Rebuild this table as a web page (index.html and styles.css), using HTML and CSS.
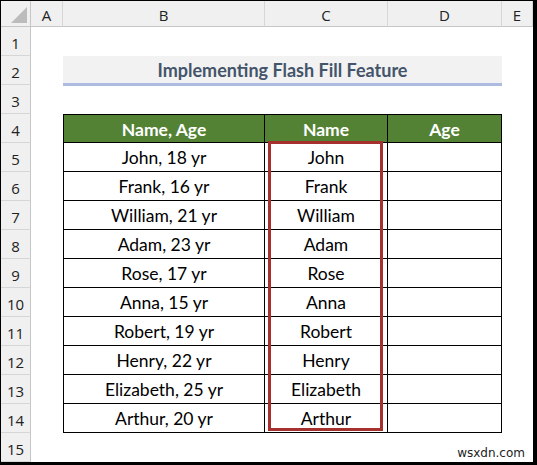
FILE: index.html
```html
<!DOCTYPE html>
<html>
<head>
<meta charset="utf-8">
<link rel="stylesheet" href="styles.css">
</head>
<body>
<div class="sheet">
  <div class="corner"><span class="tri"></span></div>
  <div class="colh">A</div>
  <div class="colh">B</div>
  <div class="colh">C</div>
  <div class="colh">D</div>
  <div class="colh">E</div>

  <div class="rowh">1</div><div class="blank full"></div>
  <div class="rowh">2</div><div class="blank"></div><div class="title">Implementing Flash Fill Feature</div><div class="blank"></div>
  <div class="rowh">3</div><div class="blank full"></div>

  <div class="rowh">4</div><div class="blank"></div>
  <div class="cell head first top">Name, Age</div><div class="cell head top">Name</div><div class="cell head top">Age</div><div class="blank"></div>

  <div class="rowh">5</div><div class="blank"></div><div class="cell first">John, 18 yr</div><div class="cell">John</div><div class="cell"></div><div class="blank"></div>
  <div class="rowh">6</div><div class="blank"></div><div class="cell first">Frank, 16 yr</div><div class="cell">Frank</div><div class="cell"></div><div class="blank"></div>
  <div class="rowh">7</div><div class="blank"></div><div class="cell first">William, 21 yr</div><div class="cell">William</div><div class="cell"></div><div class="blank"></div>
  <div class="rowh">8</div><div class="blank"></div><div class="cell first">Adam, 23 yr</div><div class="cell">Adam</div><div class="cell"></div><div class="blank"></div>
  <div class="rowh">9</div><div class="blank"></div><div class="cell first">Rose, 17 yr</div><div class="cell">Rose</div><div class="cell"></div><div class="blank"></div>
  <div class="rowh">10</div><div class="blank"></div><div class="cell first">Anna, 15 yr</div><div class="cell">Anna</div><div class="cell"></div><div class="blank"></div>
  <div class="rowh">11</div><div class="blank"></div><div class="cell first">Robert, 19 yr</div><div class="cell">Robert</div><div class="cell"></div><div class="blank"></div>
  <div class="rowh">12</div><div class="blank"></div><div class="cell first">Henry, 22 yr</div><div class="cell">Henry</div><div class="cell"></div><div class="blank"></div>
  <div class="rowh">13</div><div class="blank"></div><div class="cell first">Elizabeth, 25 yr</div><div class="cell">Elizabeth</div><div class="cell"></div><div class="blank"></div>
  <div class="rowh">14</div><div class="blank"></div><div class="cell first">Arthur, 20 yr</div><div class="cell">Arthur</div><div class="cell"></div><div class="blank"></div>
  <div class="rowh">15</div><div class="blank full"></div>

  <div class="highlight"></div>
  <div class="watermark">wsxdn.com</div>
</div>
</body>
</html>
```

FILE: styles.css
```css
html, body {
  margin: 0;
  padding: 0;
  background: #000;
}
.sheet {
  position: relative;
  margin: 1px 0 0 1px;
  width: 532px;
  height: 461px;
  background: #fff;
  display: grid;
  grid-template-columns: 30px 32px 202px 123px 114px 31px;
  grid-template-rows: 26px repeat(15, 29px);
  font-family: "Lato", "Liberation Sans", sans-serif;
  overflow: hidden;
}
.corner {
  background: #f0f0f0;
  border-right: 1px solid #c6c6c6;
  border-bottom: 1px solid #c6c6c6;
  position: relative;
}
.tri {
  position: absolute;
  right: 3px;
  bottom: 3px;
  width: 0;
  height: 0;
  border-left: 16px solid transparent;
  border-bottom: 16px solid #bcbcbc;
}
.colh {
  background: #f0f0f0;
  border-right: 1px solid #d6d6d6;
  border-bottom: 1px solid #c6c6c6;
  display: flex;
  align-items: center;
  justify-content: center;
  font-family: "Open Sans", "Noto Sans", sans-serif;
  font-size: 15px;
  color: #222;
  padding-top: 2px;
  box-sizing: border-box;
}
.rowh {
  background: #f0f0f0;
  border-right: 1px solid #c6c6c6;
  border-bottom: 1px solid #d6d6d6;
  display: flex;
  align-items: center;
  justify-content: center;
  font-family: "Open Sans", "Noto Sans", sans-serif;
  font-size: 15px;
  color: #222;
  padding-top: 3px;
  box-sizing: border-box;
}
.blank.full {
  grid-column: 2 / 7;
}
.title {
  grid-column: 3 / 6;
  margin-bottom: -1px;
  background: #f2f2f2;
  border-bottom: 3px solid #adbbe0;
  color: #44546a;
  font-weight: 700;
  font-size: 18px;
  display: flex;
  align-items: center;
  justify-content: center;
  box-sizing: border-box;
  padding-top: 1px;
}
.cell {
  border-right: 1px solid #000;
  border-bottom: 1px solid #000;
  display: flex;
  align-items: center;
  justify-content: center;
  font-size: 17.5px;
  color: #000;
  box-sizing: border-box;
  padding-top: 1px;
}
.cell.first {
  border-left: 1px solid #000;
}
.cell.top {
  border-top: 1px solid #000;
}
.cell.head {
  background: #548235;
  color: #fff;
  font-weight: 700;
  font-size: 17.5px;
}
.highlight {
  position: absolute;
  left: 267px;
  top: 140px;
  width: 115px;
  height: 290px;
  border: 3px solid #a5302e;
  box-sizing: border-box;
}
.watermark {
  position: absolute;
  right: 8px;
  bottom: 2px;
  font-family: "DejaVu Sans", sans-serif;
  font-size: 12px;
  color: #222;
}
```
